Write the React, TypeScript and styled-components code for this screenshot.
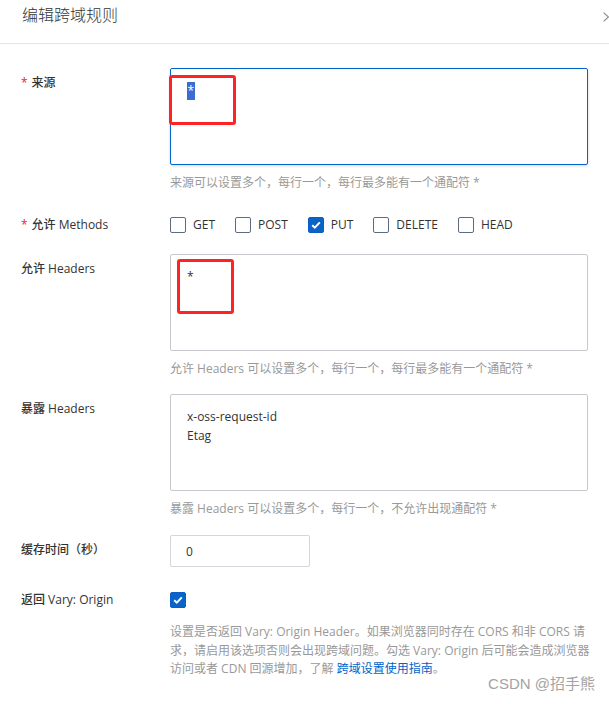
import React from 'react'
import styled, { createGlobalStyle } from 'styled-components'

const GlobalStyle = createGlobalStyle`
  html, body {
    margin: 0;
    padding: 0;
    background: #fff;
    overflow: hidden;
  }
  body {
    font-family: "Open Sans", "Noto Sans CJK SC", sans-serif;
    color: #333;
  }
`

const Panel = styled.div`
  position: relative;
  width: 609px;
  height: 704px;
  overflow: hidden;
  background: #fff;
`

const Header = styled.div`
  height: 44px;
  box-sizing: border-box;
  padding: 4px 0 0 22px;
  display: flex;
  justify-content: space-between;
  align-items: flex-start;
  border-bottom: 1px solid #e5e5e5;
`

const Title = styled.div`
  font-family: "Noto Sans CJK SC", sans-serif;
  font-size: 16px;
  line-height: 20px;
  font-weight: 300;
  color: #333;
`

const CloseEdge = styled.svg`
  margin-top: 8px;
  display: block;
`

const Form = styled.div`
  padding-top: 24px;
`

const FormItem = styled.div<{ $mt: number }>`
  display: grid;
  grid-template-columns: 170px 418px;
  margin-top: ${({ $mt }) => $mt}px;
`

const Label = styled.div<{ $pt: number; $lh: number }>`
  padding: ${({ $pt }) => $pt}px 0 0 21px;
  font-size: 12px;
  line-height: ${({ $lh }) => $lh}px;
  font-weight: 500;
  color: #333;
  white-space: nowrap;
`

const Required = styled.span`
  color: #e5262b;
  font-weight: 400;
  margin-right: 4px;
`

const Control = styled.div`
  display: flex;
  flex-direction: column;
  align-items: flex-start;
`

const TextBox = styled.div<{ $focused?: boolean }>`
  position: relative;
  width: 418px;
  height: 97px;
  box-sizing: border-box;
  padding: 12px 16px;
  border: 1px solid ${({ $focused }) => ($focused ? '#0064c8' : '#c6c9ce')};
  border-radius: 2px;
  box-shadow: ${({ $focused }) =>
    $focused ? '0 1px 3px rgba(0, 40, 100, 0.18)' : 'none'};
  font-size: 12px;
  line-height: 19px;
  color: #333;
`

const Line = styled.div``

const Selected = styled.span`
  display: inline-block;
  background: #3a6cd4;
  color: #fff;
  line-height: 18px;
  padding: 0 0.5px;
`

const Annotation = styled.div<{ $left: number; $top: number; $w: number; $h: number }>`
  position: absolute;
  left: ${({ $left }) => $left}px;
  top: ${({ $top }) => $top}px;
  width: ${({ $w }) => $w}px;
  height: ${({ $h }) => $h}px;
  box-sizing: border-box;
  border: 3px solid #ff2424;
  border-radius: 3px;
`

const Help = styled.div`
  margin-top: 9px;
  font-size: 12px;
  line-height: 18px;
  color: #999;
  white-space: nowrap;
`

const Description = styled(Help)`
  margin-top: 13px;
  line-height: 18.5px;
`

const Link = styled.a`
  color: #0064c8;
  text-decoration: none;
`

const CheckGroup = styled.div`
  display: flex;
  align-items: center;
  gap: 20px;
  height: 20px;
`

const CheckItem = styled.label`
  display: inline-flex;
  align-items: center;
  gap: 7px;
  font-size: 12px;
  line-height: 20px;
  color: #333;
`

const Box = styled.span<{ $checked?: boolean }>`
  width: 16px;
  height: 16px;
  box-sizing: border-box;
  border-radius: 2px;
  border: 1px solid ${({ $checked }) => ($checked ? '#0a5ec4' : '#5d6b80')};
  background: ${({ $checked }) => ($checked ? '#0a64c8' : '#fff')};
  display: inline-flex;
  align-items: center;
  justify-content: center;
`

const SingleCheck = styled.div`
  height: 20px;
  display: flex;
  align-items: center;
`

const NumberInput = styled.input`
  width: 140px;
  height: 32px;
  box-sizing: border-box;
  border: 1px solid #d3d6db;
  border-radius: 2px;
  padding: 0 15px;
  font-family: "Open Sans", "Noto Sans CJK SC", sans-serif;
  font-size: 12px;
  color: #333;
  outline: none;
`

const Watermark = styled.div`
  position: absolute;
  right: 14px;
  top: 675px;
  font-family: "Liberation Sans", "Noto Sans CJK SC", sans-serif;
  font-size: 15px;
  line-height: 18px;
  color: #a3a3a3;
`

const Checkbox: React.FC<{ checked?: boolean }> = ({ checked }) => (
  <Box $checked={checked}>
    {checked && (
      <svg width="12" height="12" viewBox="0 0 12 12">
        <path d="M2.2 6.2 L4.8 8.7 L9.8 3.4" fill="none" stroke="#fff" strokeWidth="2" />
      </svg>
    )}
  </Box>
)

const methods = [
  { name: 'GET', checked: false },
  { name: 'POST', checked: false },
  { name: 'PUT', checked: true },
  { name: 'DELETE', checked: false },
  { name: 'HEAD', checked: false },
]

const App: React.FC = () => {
  return (
    <Panel>
      <GlobalStyle />
      <Header>
        <Title>编辑跨域规则</Title>
        <CloseEdge width="6" height="10" viewBox="0 0 6 10">
          <path d="M0.6 0.6 L5.5 5 L0.6 9.4" fill="none" stroke="#8c8c8c" strokeWidth="1.2" />
        </CloseEdge>
      </Header>

      <Form>
        <FormItem $mt={0}>
          <Label $pt={6} $lh={18}>
            <Required>*</Required>来源
          </Label>
          <Control>
            <TextBox $focused>
              <Line>
                <Selected>*</Selected>
              </Line>
              <Annotation $left={-2} $top={6} $w={67} $h={50} />
            </TextBox>
            <Help>来源可以设置多个，每行一个，每行最多能有一个通配符 *</Help>
          </Control>
        </FormItem>

        <FormItem $mt={23}>
          <Label $pt={0} $lh={20}>
            <Required>*</Required>允许 Methods
          </Label>
          <CheckGroup>
            {methods.map((m) => (
              <CheckItem key={m.name}>
                <Checkbox checked={m.checked} />
                {m.name}
              </CheckItem>
            ))}
          </CheckGroup>
        </FormItem>

        <FormItem $mt={19}>
          <Label $pt={6} $lh={18}>
            允许 Headers
          </Label>
          <Control>
            <TextBox>
              <Line>*</Line>
              <Annotation $left={6} $top={4} $w={57} $h={55} />
            </TextBox>
            <Help>允许 Headers 可以设置多个，每行一个，每行最多能有一个通配符 *</Help>
          </Control>
        </FormItem>

        <FormItem $mt={16}>
          <Label $pt={6} $lh={18}>
            暴露 Headers
          </Label>
          <Control>
            <TextBox>
              <Line>x-oss-request-id</Line>
              <Line>Etag</Line>
            </TextBox>
            <Help>暴露 Headers 可以设置多个，每行一个，不允许出现通配符 *</Help>
          </Control>
        </FormItem>

        <FormItem $mt={17}>
          <Label $pt={6} $lh={18}>
            缓存时间（秒）
          </Label>
          <Control>
            <NumberInput readOnly value="0" />
          </Control>
        </FormItem>

        <FormItem $mt={23}>
          <Label $pt={0} $lh={20}>
            返回 Vary: Origin
          </Label>
          <Control>
            <SingleCheck>
              <Checkbox checked />
            </SingleCheck>
            <Description>
              设置是否返回 Vary: Origin Header。如果浏览器同时存在 CORS 和非 CORS 请
              <br />
              求，请启用该选项否则会出现跨域问题。勾选 Vary: Origin 后可能会造成浏览器
              <br />
              访问或者 CDN 回源增加，了解 <Link href="#">跨域设置使用指南</Link>。
            </Description>
          </Control>
        </FormItem>
      </Form>

      <Watermark>CSDN @招手熊</Watermark>
    </Panel>
  )
}

export default App
